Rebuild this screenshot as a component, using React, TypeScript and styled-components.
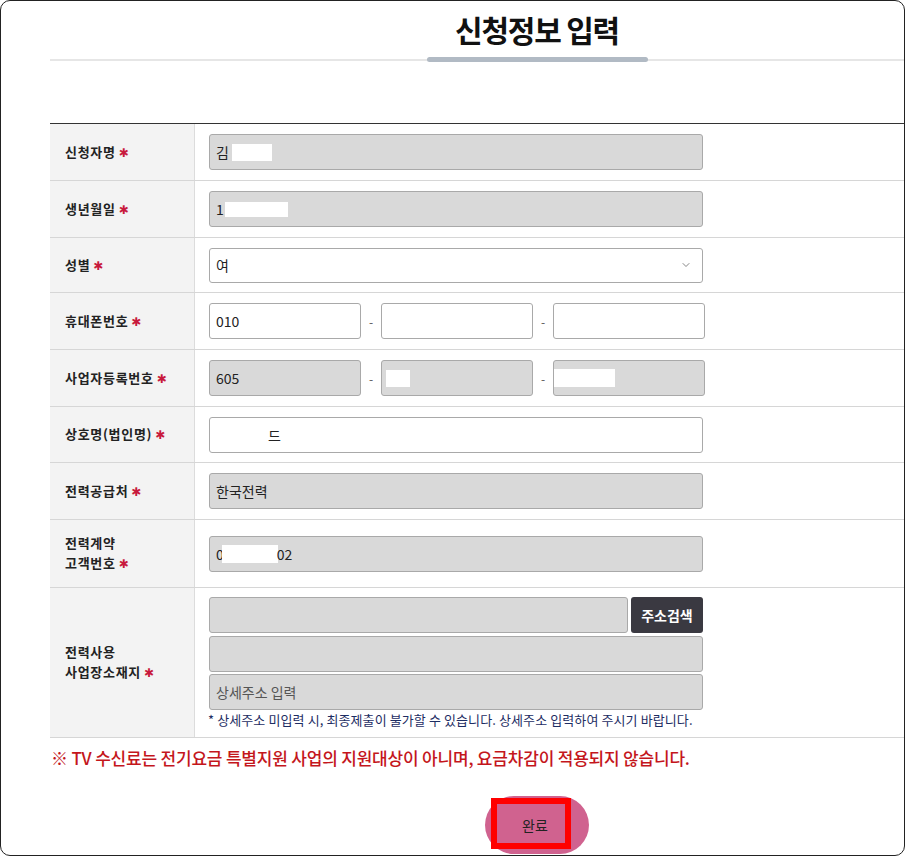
import React from "react";
import styled, { createGlobalStyle } from "styled-components";

const GlobalStyle = createGlobalStyle`
  html, body {
    margin: 0;
    padding: 0;
    background: #ffffff;
  }
  body {
    font-family: "Noto Sans CJK KR", "Noto Sans", sans-serif;
    color: #222;
  }
`;

const Frame = styled.div`
  width: 905px;
  height: 856px;
  box-sizing: border-box;
  border: 1px solid #222;
  border-radius: 10px;
  overflow: hidden;
  padding: 7px 0 0 49px;
  background: #fff;
`;

const Header = styled.div`
  padding-left: 120px;
  display: flex;
  justify-content: center;
`;

const Title = styled.h1`
  margin: 0;
  font-size: 30px;
  line-height: 42px;
  font-weight: 700;
  letter-spacing: -1.2px;
  color: #111;
`;

const Rule = styled.div`
  margin-top: 7px;
  height: 5px;
  padding-left: 120px;
  display: flex;
  justify-content: center;
  background: linear-gradient(#e6e6e6, #e6e6e6) center / 100% 2px no-repeat;
`;

const RuleBar = styled.div`
  width: 221px;
  height: 5px;
  border-radius: 3px;
  background: #b1bac4;
`;

const Table = styled.div`
  margin-top: 61px;
  border-top: 1px solid #333;
`;

const Row = styled.div<{ $minH?: number }>`
  display: grid;
  grid-template-columns: 145px 1fr;
  border-bottom: 1px solid #d6d6d6;
  min-height: ${(p) => p.$minH ?? 56}px;
`;

const Label = styled.div`
  background: #f3f3f3;
  border-right: 1px solid #dcdcdc;
  padding: 0 15px;
  display: flex;
  align-items: center;
  font-size: 13px;
  font-weight: 700;
  line-height: 20px;
  letter-spacing: 0.7px;
  color: #222;
`;

const Req = styled.span`
  color: #c8193c;
  font-size: 12px;
  margin-left: 3px;
  font-family: "DejaVu Sans", sans-serif;
`;

const Cell = styled.div<{ $pad?: string }>`
  padding: ${(p) => p.$pad ?? "0 14px"};
  display: flex;
  flex-direction: column;
  justify-content: center;
`;

const Field = styled.div<{ $ro?: boolean; $w?: number; $h?: number }>`
  box-sizing: border-box;
  width: ${(p) => (p.$w ? `${p.$w}px` : "494px")};
  height: ${(p) => p.$h ?? 36}px;
  border: 1px solid #a9a9a9;
  border-radius: 3px;
  background: ${(p) => (p.$ro ? "#d9d9d9" : "#ffffff")};
  padding: 0 6px;
  display: flex;
  align-items: center;
  font-size: 14px;
  color: #222;
  white-space: nowrap;
  overflow: hidden;
`;

const SelectField = styled(Field)`
  justify-content: space-between;
  padding-right: 10px;
`;

const Mask = styled.span<{ $w: number; $h?: number; $ml?: number }>`
  display: inline-block;
  width: ${(p) => p.$w}px;
  height: ${(p) => p.$h ?? 17}px;
  margin-left: ${(p) => p.$ml ?? 0}px;
  background: #ffffff;
`;

const Split = styled.div`
  display: flex;
  align-items: center;
`;

const Dash = styled.span`
  width: 20px;
  text-align: center;
  font-size: 12px;
  color: #555;
`;

const AddrStack = styled.div`
  display: flex;
  flex-direction: column;
  gap: 2px;
`;

const AddrTop = styled.div`
  display: flex;
  gap: 3px;
  margin-bottom: 1px;
`;

const SearchButton = styled.button`
  width: 72px;
  height: 36px;
  border: none;
  border-radius: 3px;
  background: #3a3941;
  color: #fff;
  font-family: inherit;
  font-size: 14px;
  font-weight: 700;
  padding: 0;
`;

const Placeholder = styled.span`
  color: #555;
`;

const Note = styled.p`
  margin: 1px 0 0 -1px;
  font-size: 13px;
  line-height: 18px;
  letter-spacing: 0.1px;
  color: #1d2d63;
`;

const Notice = styled.p`
  margin: 9px 0 0 1px;
  font-size: 17px;
  line-height: 22px;
  font-weight: 500;
  letter-spacing: -0.2px;
  color: #c4161c;
`;

const Footer = styled.div`
  padding-left: 120px;
  margin-top: 27px;
  display: flex;
  justify-content: center;
`;

const DoneButton = styled.button`
  position: relative;
  width: 104px;
  height: 58px;
  border: none;
  border-radius: 29px;
  background: #d0628f;
  font-family: inherit;
  font-size: 14px;
  color: #222;
  padding: 0;
`;

const Highlight = styled.span`
  position: absolute;
  left: 6px;
  top: 2px;
  width: 80px;
  height: 51px;
  box-sizing: border-box;
  border: 6px solid #ff0000;
`;

const DoneText = styled.span`
  position: relative;
  margin-left: -4px;
`;

const Chevron = () => (
  <svg width="12" height="12" viewBox="0 0 24 24" fill="none" stroke="#777" strokeWidth="1.8" strokeLinecap="round" strokeLinejoin="round">
    <path d="m6 9 6 6 6-6" />
  </svg>
);

const RowLabel: React.FC<{ children: React.ReactNode }> = ({ children }) => (
  <Label>
    <span>
      {children}
      <Req>✱</Req>
    </span>
  </Label>
);

export default function App() {
  return (
    <>
      <GlobalStyle />
      <Frame>
        <Header>
          <Title>신청정보 입력</Title>
        </Header>
        <Rule>
          <RuleBar />
        </Rule>

        <Table>
          <Row>
            <RowLabel>신청자명</RowLabel>
            <Cell>
              <Field $ro>
                김<Mask $w={40} $ml={3} />
              </Field>
            </Cell>
          </Row>
          <Row>
            <RowLabel>생년월일</RowLabel>
            <Cell>
              <Field $ro>
                1<Mask $w={63} $h={15} $ml={1} />
              </Field>
            </Cell>
          </Row>
          <Row $minH={54}>
            <RowLabel>성별</RowLabel>
            <Cell>
              <SelectField $h={35}>
                여
                <Chevron />
              </SelectField>
            </Cell>
          </Row>
          <Row>
            <RowLabel>휴대폰번호</RowLabel>
            <Cell>
              <Split>
                <Field $w={152}>010</Field>
                <Dash>-</Dash>
                <Field $w={152} />
                <Dash>-</Dash>
                <Field $w={152} />
              </Split>
            </Cell>
          </Row>
          <Row>
            <RowLabel>사업자등록번호</RowLabel>
            <Cell>
              <Split>
                <Field $ro $w={152}>605</Field>
                <Dash>-</Dash>
                <Field $ro $w={152}>
                  <Mask $w={24} $h={17} $ml={-2} />
                </Field>
                <Dash>-</Dash>
                <Field $ro $w={152} style={{ paddingLeft: 0 }}>
                  <Mask $w={61} $h={18} />
                </Field>
              </Split>
            </Cell>
          </Row>
          <Row $minH={55}>
            <RowLabel>상호명(법인명)</RowLabel>
            <Cell>
              <Field style={{ paddingLeft: 0 }}>
                <Mask $w={53} $h={22} />
                <span style={{ marginLeft: 5 }}>드</span>
              </Field>
            </Cell>
          </Row>
          <Row>
            <RowLabel>전력공급처</RowLabel>
            <Cell>
              <Field $ro>한국전력</Field>
            </Cell>
          </Row>
          <Row $minH={67}>
            <RowLabel>
              전력계약
              <br />
              고객번호
            </RowLabel>
            <Cell>
              <Field $ro>
                0<Mask $w={56} $h={18} $ml={-2} />
                <span style={{ marginLeft: -1 }}>02</span>
              </Field>
            </Cell>
          </Row>
          <Row $minH={149}>
            <RowLabel>
              전력사용
              <br />
              사업장소재지
            </RowLabel>
            <Cell $pad="9px 14px 8px">
              <AddrStack>
                <AddrTop>
                  <Field $ro $w={419} />
                  <SearchButton>주소검색</SearchButton>
                </AddrTop>
                <Field $ro />
                <Field $ro>
                  <Placeholder>상세주소 입력</Placeholder>
                </Field>
              </AddrStack>
              <Note>* 상세주소 미입력 시, 최종제출이 불가할 수 있습니다. 상세주소 입력하여 주시기 바랍니다.</Note>
            </Cell>
          </Row>
        </Table>

        <Notice>※ TV 수신료는 전기요금 특별지원 사업의 지원대상이 아니며, 요금차감이 적용되지 않습니다.</Notice>

        <Footer>
          <DoneButton>
            <Highlight />
            <DoneText>완료</DoneText>
          </DoneButton>
        </Footer>
      </Frame>
    </>
  );
}
